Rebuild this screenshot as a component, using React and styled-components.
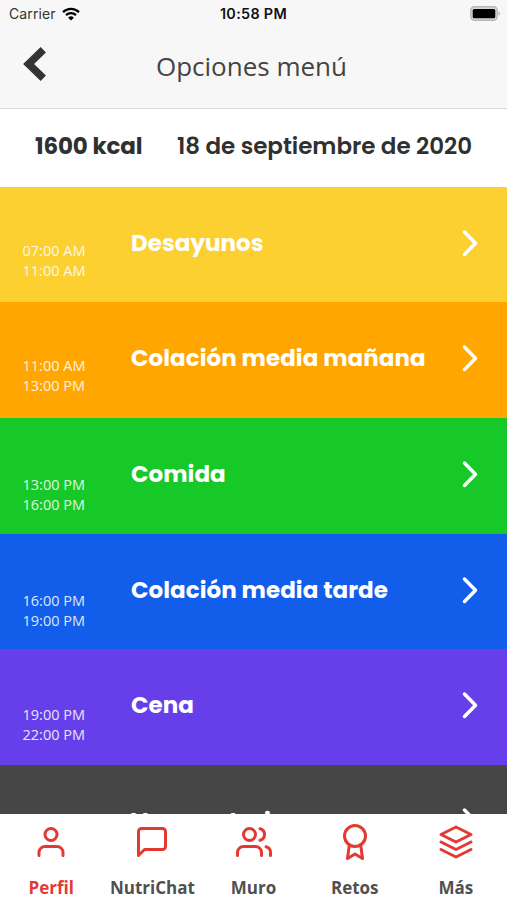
import React from "react";
import styled, { createGlobalStyle } from "styled-components";
import { FiUser, FiMessageSquare, FiUsers, FiAward, FiLayers } from "react-icons/fi";

const GlobalStyle = createGlobalStyle`
  * { box-sizing: border-box; }
  body { margin: 0; background: #fff; }
`;

const Screen = styled.div`
  width: 507px;
  height: 900px;
  display: flex;
  flex-direction: column;
  overflow: hidden;
  font-family: "Open Sans", sans-serif;
  background: #fff;
`;

const Header = styled.header`
  flex: none;
  height: 108.5px;
  background: #f7f7f7;
  border-bottom: 1px solid #dcdcdc;
`;

const StatusBar = styled.div`
  height: 27px;
  padding: 0 6px 0 9px;
  display: grid;
  grid-template-columns: 1fr auto 1fr;
  align-items: center;
  font-family: Inter, sans-serif;
  color: #111;
`;

const Carrier = styled.div`
  display: flex;
  align-items: center;
  gap: 6px;
  font-size: 14px;
  color: #333;
  letter-spacing: 0.1px;
`;

const Clock = styled.div`
  margin-left: -3px;
  font-size: 14.4px;
  font-weight: 600;
  letter-spacing: 0.3px;
`;

const BatterySlot = styled.div`
  display: flex;
  justify-content: flex-end;
`;

const TitleBar = styled.div`
  height: 78px;
  padding: 0 23px;
  display: grid;
  grid-template-columns: 40px 1fr 44px;
  align-items: center;
`;

const BackIcon = styled.svg`
  display: block;
  margin-bottom: 4px;
`;

const Title = styled.h1`
  margin: 0;
  text-align: center;
  font-size: 26px;
  font-weight: 400;
  color: #444;
`;

const Summary = styled.div`
  flex: none;
  height: 78px;
  padding: 0 35px 3px;
  display: flex;
  align-items: center;
  justify-content: space-between;
  font-family: Poppins, sans-serif;
  font-size: 23px;
  color: #303030;
  white-space: nowrap;
`;

const Kcal = styled.div`
  font-weight: 700;
  letter-spacing: -0.15px;
`;

const DateLabel = styled.div`
  font-weight: 600;
  letter-spacing: -0.03px;
`;

const MealList = styled.main`
  flex: 1;
  min-height: 0;
  overflow: hidden;
`;

const MealRow = styled.section`
  height: 115.7px;
  padding-right: 27px;
  display: grid;
  grid-template-columns: 131px 1fr 20px;
  background: ${(p) => p.$color};
  color: #fff;
`;

const Hours = styled.div`
  padding: ${(p) => p.$top}px 0 0 22.5px;
  font-size: 14.5px;
  line-height: 20px;
  opacity: 0.85;
  white-space: nowrap;
`;

const MealName = styled.h2`
  margin: 0;
  padding-top: 38px;
  font-family: Poppins, sans-serif;
  font-size: 23px;
  line-height: 36px;
  font-weight: 700;
  letter-spacing: 0.03px;
  white-space: nowrap;
`;

const Chevron = styled.svg`
  display: block;
  margin-top: 41px;
`;

const TabBar = styled.nav`
  flex: none;
  height: 86.5px;
  display: grid;
  grid-template-columns: repeat(5, 101.2px);
  padding-left: 0.6px;
  background: #fff;
`;

const Tab = styled.div`
  display: flex;
  flex-direction: column;
  align-items: center;
  padding-top: 10.5px;
  gap: 15.5px;
  font-size: 17px;
  line-height: 24px;
  font-weight: 700;
  color: ${(p) => (p.$active ? "#e53935" : "#505050")};

  svg { color: #e23a33; }
`;

const meals = [
  { name: "Desayunos", from: "07:00 AM", to: "11:00 AM", color: "#fdd032", top: 54 },
  { name: "Colación media mañana", from: "11:00 AM", to: "13:00 PM", color: "#ffa600", top: 54 },
  { name: "Comida", from: "13:00 PM", to: "16:00 PM", color: "#17c928", top: 57 },
  { name: "Colación media tarde", from: "16:00 PM", to: "19:00 PM", color: "#125eea", top: 57 },
  { name: "Cena", from: "19:00 PM", to: "22:00 PM", color: "#673fea", top: 56 },
  { name: "Ver recetario", from: "", to: "", color: "#464646", top: 56 },
];

const tabs = [
  { label: "Perfil", Icon: FiUser, active: true },
  { label: "NutriChat", Icon: FiMessageSquare },
  { label: "Muro", Icon: FiUsers },
  { label: "Retos", Icon: FiAward },
  { label: "Más", Icon: FiLayers },
];

function WifiIcon() {
  return (
    <svg width="18" height="14" viewBox="0 0 18 14" fill="none" stroke="#000" strokeWidth="2.3">
      <path d="M1 5.1a11.4 11.4 0 0 1 16 0" />
      <path d="M4 8.2a7.2 7.2 0 0 1 10 0" />
      <path d="M9 13.6 6.1 10.7a4.2 4.2 0 0 1 5.8 0Z" fill="#000" stroke="none" />
    </svg>
  );
}

function BatteryIcon() {
  return (
    <svg width="31" height="15" viewBox="0 0 31 15">
      <rect x="0.8" y="0.8" width="26.4" height="13.4" rx="3.6" fill="#d8d8d8" stroke="#b8b8b8" strokeWidth="1.4" />
      <rect x="2.7" y="2.9" width="22.6" height="9.4" rx="1.6" fill="#000" />
      <path d="M28.6 5.2a2.6 2.6 0 0 1 0 4.6Z" fill="#aaa" />
    </svg>
  );
}

export default function App() {
  return (
    <Screen>
      <GlobalStyle />
      <Header>
        <StatusBar>
          <Carrier>Carrier<WifiIcon /></Carrier>
          <Clock>10:58 PM</Clock>
          <BatterySlot><BatteryIcon /></BatterySlot>
        </StatusBar>
        <TitleBar>
          <BackIcon width="24" height="36" viewBox="0 0 24 36" fill="none" stroke="#333" strokeWidth="7.6">
            <path d="M20.3 3.7 5.6 18 20.3 32.3" />
          </BackIcon>
          <Title>Opciones menú</Title>
        </TitleBar>
      </Header>
      <Summary>
        <Kcal>1600 kcal</Kcal>
        <DateLabel>18 de septiembre de 2020</DateLabel>
      </Summary>
      <MealList>
        {meals.map((m) => (
          <MealRow key={m.name} $color={m.color}>
            <Hours $top={m.top}>
              <div>{m.from}</div>
              <div>{m.to}</div>
            </Hours>
            <MealName>{m.name}</MealName>
            <Chevron width="20" height="30" viewBox="0 0 20 30" fill="none" stroke="#fff" strokeWidth="3.5" strokeLinecap="round" strokeLinejoin="round">
              <path d="M4.5 4 15.5 15.2 4.5 26.4" />
            </Chevron>
          </MealRow>
        ))}
      </MealList>
      <TabBar>
        {tabs.map(({ label, Icon, active }) => (
          <Tab key={label} $active={active}>
            <Icon size={36} />
            <span>{label}</span>
          </Tab>
        ))}
      </TabBar>
    </Screen>
  );
}
